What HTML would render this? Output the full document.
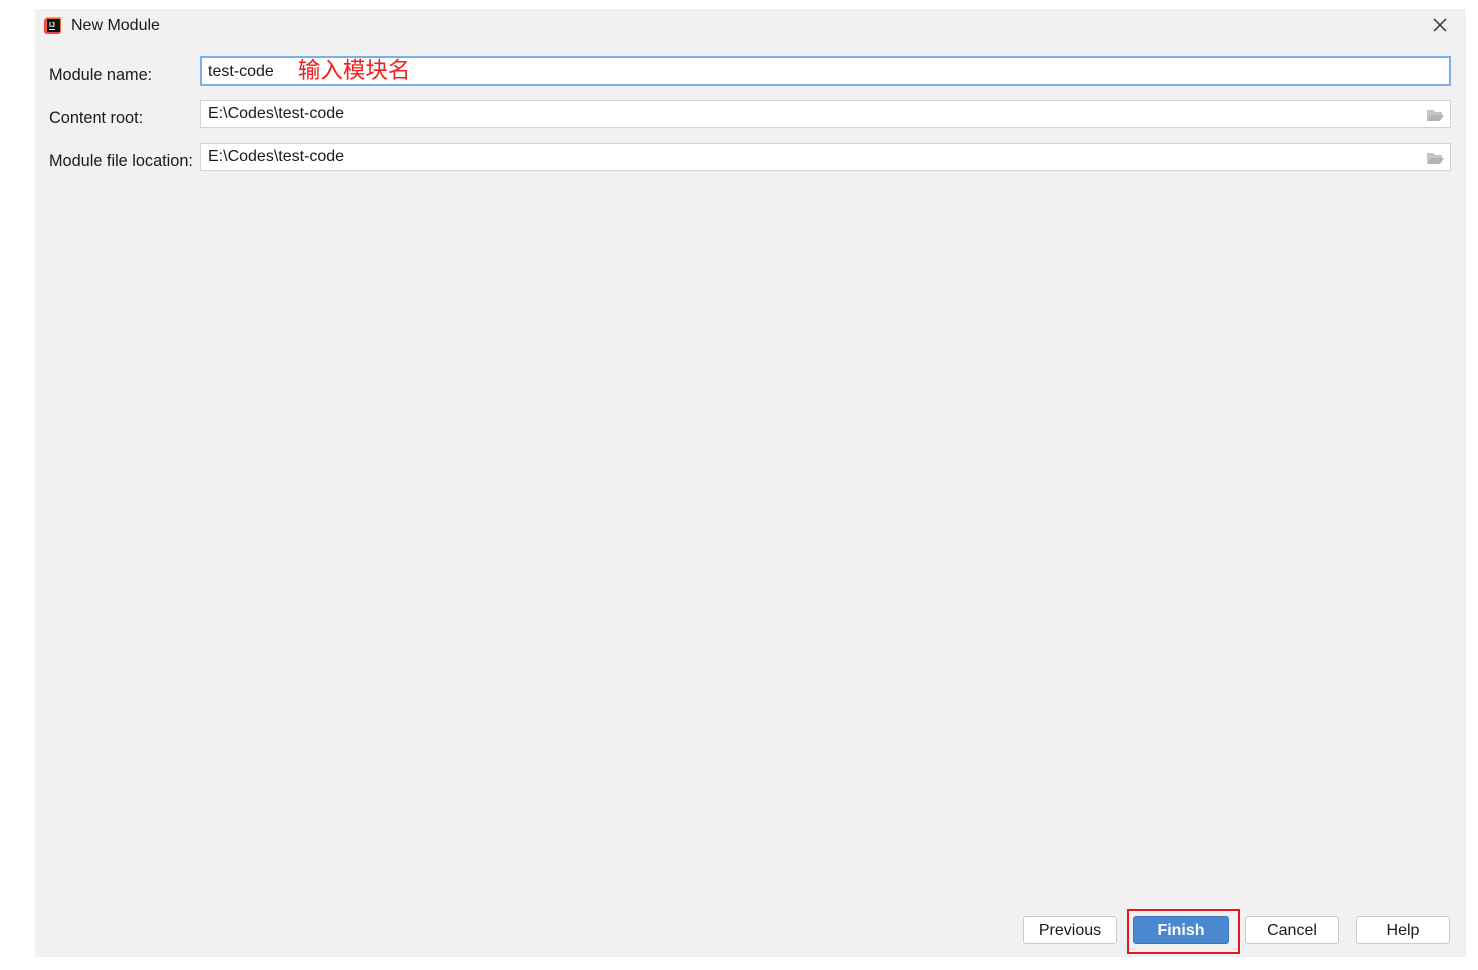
<!DOCTYPE html>
<html><head><meta charset="utf-8"><style>
body{margin:0;width:1478px;height:970px;background:#fff;position:relative;overflow:hidden;font-family:"Liberation Sans","Noto Sans CJK SC",sans-serif;color:#1a1a1a}
.dlg{position:absolute;left:35px;top:9px;width:1431px;height:948px;background:#f1f1f1}
.abs{position:absolute}
.lbl{position:absolute;left:49px;font-size:16.3px}
.fld{position:absolute;left:200px;height:28px;background:#fff;border:1px solid #d3d3d3;font-size:16px;line-height:26px;padding-left:7px;box-sizing:border-box;width:1251px}
.btn{position:absolute;top:916px;width:94px;height:28px;border:1px solid #c9c9c9;border-radius:3px;background:#fff;font-size:16px;text-align:center;line-height:28px;box-sizing:border-box}
.fold{position:absolute;right:6px;top:7px}
</style></head><body>
<div class="dlg"></div>
<svg class="abs" style="left:43px;top:16px" width="20" height="20"><rect x="1" y="2" width="17" height="16" rx="3" fill="#e8435c"/><rect x="3" y="1" width="15" height="15" fill="#fc801d" opacity=".7"/><rect x="4" y="3" width="13" height="13" fill="#111"/><text x="6" y="11" font-size="7" fill="#fff" font-family="Liberation Sans" font-weight="bold">IJ</text><rect x="6" y="13" width="6" height="1" fill="#fff"/></svg>
<div class="abs" style="left:71px;top:17px;font-size:16px">New Module</div>
<svg class="abs" style="left:1433px;top:18px" width="14" height="14"><path d="M1 1L13 13M13 1L1 13" stroke="#333" stroke-width="1.5"/></svg>
<div class="lbl" style="top:66px">Module name:</div>
<div class="lbl" style="top:109px">Content root:</div>
<div class="lbl" style="top:152px">Module file location:</div>
<div class="fld" style="top:56px;height:30px;border:2px solid #7bb0e6;line-height:26px;padding-left:6px">test-code<span style="color:#f0201e;font-size:22.5px;margin-left:24px;vertical-align:-2px">输入模块名</span></div>
<div class="fld" style="top:100px">E:\Codes\test-code<svg class="fold" width="18" height="14"><path d="M1 2h6l2 2h7v3H5L1 13z" fill="#c4c4c4"/><path d="M5 7h13l-4 6H1z" fill="#b3b3b3"/></svg></div>
<div class="fld" style="top:143px">E:\Codes\test-code<svg class="fold" width="18" height="14"><path d="M1 2h6l2 2h7v3H5L1 13z" fill="#c4c4c4"/><path d="M5 7h13l-4 6H1z" fill="#b3b3b3"/></svg></div>
<div class="btn" style="left:1023px">Previous</div>
<div class="btn" style="left:1133px;width:96px;background:#4a89d0;border-color:#3c76b9;color:#fff;font-weight:bold">Finish</div>
<div class="abs" style="left:1127px;top:909px;width:109px;height:41px;border:2px solid #e8151f"></div>
<div class="btn" style="left:1245px">Cancel</div>
<div class="btn" style="left:1356px">Help</div>
</body></html>
